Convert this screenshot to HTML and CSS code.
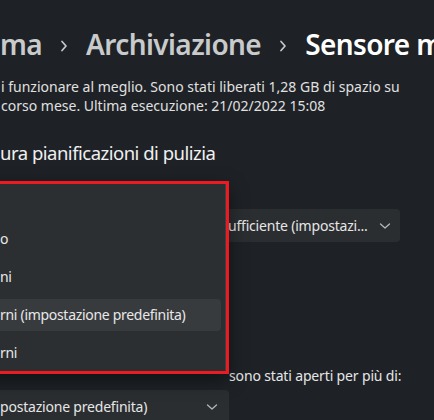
FILE: index.html
```html
<!DOCTYPE html>
<html lang="it">
<head>
<meta charset="utf-8">
<link rel="stylesheet" href="styles.css">
</head>
<body>
<div class="page">
  <div class="crumbs">
    <span class="crumb">ma</span>
    <svg class="chev" width="8" height="12" viewBox="0 0 8 12"><path d="M2 1.5 L6 6 L2 10.5" fill="none" stroke="#c8c9ca" stroke-width="1.7" stroke-linecap="round" stroke-linejoin="round"/></svg>
    <span class="crumb">Archiviazione</span>
    <svg class="chev" width="8" height="12" viewBox="0 0 8 12"><path d="M2 1.5 L6 6 L2 10.5" fill="none" stroke="#c8c9ca" stroke-width="1.7" stroke-linecap="round" stroke-linejoin="round"/></svg>
    <span class="crumb current">Sensore m</span>
  </div>
  <p class="desc">i funzionare al meglio. Sono stati liberati 1,28 GB di spazio su<br>corso mese. Ultima esecuzione: 21/02/2022 15:08</p>
  <h2 class="subtitle">ura pianificazioni di pulizia</h2>

  <div class="row row-run">
    <div class="combo combo-run">
      <span class="combo-text">ufficiente (impostazi...</span>
      <svg class="combo-chev" width="12" height="8" viewBox="0 0 12 8"><path d="M1.5 2 L6 6 L10.5 2" fill="none" stroke="#b4b6b8" stroke-width="1.3" stroke-linecap="round" stroke-linejoin="round"/></svg>
    </div>
  </div>

  <div class="label-row">sono stati aperti per più di:</div>
  <div class="row row-dl">
    <div class="combo combo-dl">
      <span class="combo-text">postazione predefinita)</span>
      <svg class="combo-chev" width="12" height="8" viewBox="0 0 12 8"><path d="M1.5 2 L6 6 L10.5 2" fill="none" stroke="#b4b6b8" stroke-width="1.3" stroke-linecap="round" stroke-linejoin="round"/></svg>
    </div>
  </div>

  <div class="popup">
    <div class="menu">
      <div class="item"></div>
      <div class="item">o</div>
      <div class="item">ni</div>
      <div class="item selected">rni (impostazione predefinita)</div>
      <div class="item">rni</div>
    </div>
  </div>
</div>
</body>
</html>
```
FILE: styles.css
```css
html, body {
  margin: 0;
  padding: 0;
  background: #1e2226;
  overflow: hidden;
}
body {
  width: 434px;
  height: 420px;
  font-family: "Noto Sans", "Open Sans", sans-serif;
  color: #e6e6e6;
}
.page {
  position: relative;
  width: 434px;
  height: 420px;
  overflow: hidden;
}
.crumbs {
  display: flex;
  align-items: center;
  white-space: nowrap;
  padding-top: 25px;
  padding-left: 0;
  height: 38px;
}
.crumb {
  font-size: 28px;
  font-weight: 600;
  color: #c9cacb;
  letter-spacing: -0.6px;
  line-height: 38px;
}
.crumb.current {
  color: #ffffff;
}
.chev {
  margin: 4px 18px 0 18px;
  flex: none;
}
.desc {
  margin: 14px 0 0 1px;
  font-size: 14px;
  line-height: 19px;
  color: #e0e0e0;
  white-space: nowrap;
}
.subtitle {
  margin: 25px 0 0 0;
  font-size: 18.5px;
  font-weight: 400;
  letter-spacing: -0.5px;
  line-height: 26px;
  color: #f0f0f0;
  white-space: nowrap;
}
.row {
  display: flex;
}
.row-run {
  margin-top: 43px;
  justify-content: flex-end;
  padding-right: 34px;
}
.combo {
  display: flex;
  align-items: center;
  justify-content: space-between;
  background: #2b2e31;
  border-radius: 4px;
  height: 33px;
  box-sizing: border-box;
  font-size: 14px;
  color: #e6e6e6;
  white-space: nowrap;
}
.combo-run {
  width: 190px;
  padding: 0 9px 0 18px;
  letter-spacing: -0.2px;
}
.combo-dl {
  width: 229px;
  padding: 0 11px 0 0;
  border-radius: 0 4px 4px 0;
  letter-spacing: -0.2px;
}
.combo-text {
  line-height: 20px;
}
.combo-chev {
  flex: none;
}
.label-row {
  margin-top: 124px;
  padding-left: 229px;
  font-size: 14px;
  line-height: 20px;
  letter-spacing: -0.15px;
  color: #e6e6e6;
  white-space: nowrap;
}
.row-dl {
  margin-top: 4px;
}
.popup {
  position: absolute;
  left: -20px;
  top: 181px;
  width: 249px;
  height: 193px;
  box-sizing: border-box;
  border: 3px solid #ee1a22;
  background: #2c2f32;
  box-shadow: 0 6px 18px rgba(0,0,0,0.45);
}
.menu {
  display: flex;
  flex-direction: column;
  gap: 6px;
  padding: 1px 4px 0 0;
  border-right: 1px solid #3d4044;
  height: 100%;
  box-sizing: border-box;
}
.item {
  flex: none;
  height: 32px;
  line-height: 32px;
  padding-left: 17px;
  font-size: 14px;
  letter-spacing: -0.3px;
  color: #e8e8e8;
  white-space: nowrap;
  border-radius: 4px;
}
.item.selected {
  background: #383b3e;
}
```
